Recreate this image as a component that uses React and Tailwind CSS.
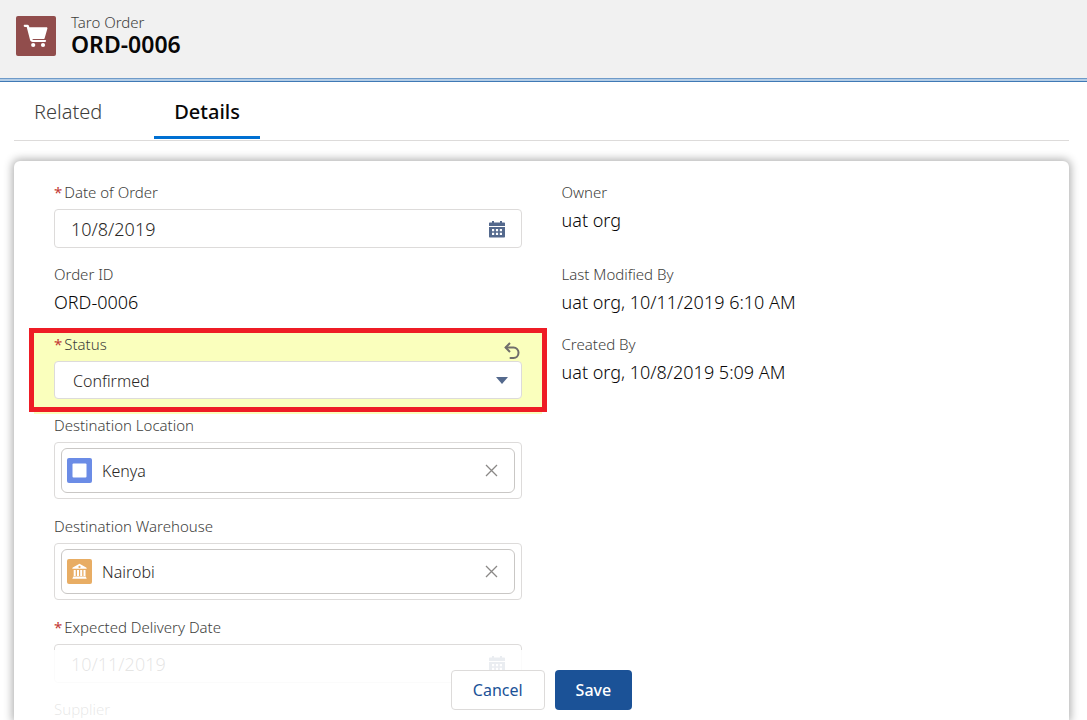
import React from 'react';
import clsx from 'clsx';

const CartIcon = () => (
  <svg width="40" height="40" viewBox="0 0 40 40" fill="#fff" aria-hidden="true">
    <path d="M8.800 8.700h2.600c.8 0 1.300.4 1.500 1.100l.5 1.500h17c.8 0 1.200.6 1 1.300l-2.700 9.300c-.2.800-.8 1.200-1.600 1.200H16.300c.2.700.6 1 1.300 1h11.400c.7 0 1.100.4 1.100.9s-.4.900-1.100.900H16.700c-1.500 0-2.300-.8-2.700-2.200L10.700 10.900H8.800c-.7 0-1.100-.5-1.100-1.100s.4-1.100 1.100-1.100z" />
    <circle cx="17.200" cy="29" r="2.100" />
    <circle cx="27" cy="29" r="2.100" />
  </svg>
);

const CalendarIcon = () => (
  <svg width="16" height="17" viewBox="0 0 16 17" aria-hidden="true">
    <path
      fillRule="evenodd"
      fill="#54698d"
      d="M3 0h2v1.500h6V0h2v1.500h2c.6 0 1 .4 1 1V5H0V2.500c0-.6.400-1 1-1h2zM0 6h16v9.500c0 .6-.4 1-1 1H1c-.6 0-1-.4-1-1zM3 8v2.200h2.200V8zm3.900 0v2.200h2.200V8zm3.900 0v2.200H13V8zM3 11.700v2.200h2.200v-2.200zm3.900 0v2.200h2.200v-2.200zm3.900 0v2.200H13v-2.200z"
    />
  </svg>
);

const UndoIcon = () => (
  <svg width="16" height="18" viewBox="0 0 16 18" fill="none" stroke="#706e6b" strokeWidth="2" aria-hidden="true">
    <path d="M6 1L1.600 5.500 6 10" />
    <path d="M2 5.500h7.500a5 5 0 0 1 5 5.300c0 3.200-2.200 5.200-5 5.200H6.500" strokeLinecap="round" />
  </svg>
);

const CloseIcon = () => (
  <svg width="13" height="13" viewBox="0 0 13 13" stroke="#8a8886" strokeWidth="1.300" aria-hidden="true">
    <path d="M1 1l11 11M12 1L1 12" />
  </svg>
);

const LocationIcon = () => (
  <svg width="25" height="25" viewBox="0 0 25 25" aria-hidden="true">
    <rect width="25" height="25" rx="2" fill="#6b8ce6" />
    <rect x="5.500" y="5.500" width="14" height="14" rx="1" fill="#fff" />
  </svg>
);

const WarehouseIcon = () => (
  <svg width="25" height="25" viewBox="0 0 25 25" fill="#fff" aria-hidden="true">
    <rect width="25" height="25" rx="2" fill="#e8ad64" />
    <path
      fillRule="evenodd"
      d="M12.500 4.800l6.700 3.700c.4.300.5.600.5 1.200H5.300c0-.6.100-.9.500-1.200zM12.500 6.800a1.100 1.100 0 1 0 0 2.200 1.100 1.100 0 0 0 0-2.200z"
    />
    <path d="M6.700 11h2v6h-2zM10 11h2v6h-2zM13.200 11h2v6h-2zM16.500 11h2v6h-2zM6.300 17.500h12.500l.9 2.300H5.300z" />
  </svg>
);

const Label = ({ htmlFor, required, children }) => {
  const Tag = htmlFor ? 'label' : 'div';
  return (
    <Tag htmlFor={htmlFor} className="block text-[15px] leading-[18px] text-[#3e3e3c]">
      {required && <span className="mr-0.5 font-normal text-[#c23934]">*</span>}
      {children}
    </Tag>
  );
};

const StaticField = ({ label, value }) => (
  <div className="pb-[21px]">
    <Label>{label}</Label>
    <p className="mt-[7px] text-lg leading-6 text-[#080707]">{value}</p>
  </div>
);

const DateField = ({ id, label, value }) => (
  <div className="pb-[17px]">
    <Label htmlFor={id} required>
      {label}
    </Label>
    <div className="relative mt-2">
      <input
        id={id}
        type="text"
        defaultValue={value}
        className="h-[39px] w-full rounded border border-[#dddbda] bg-white px-4 text-lg text-[#2b2826]"
      />
      <button type="button" aria-label={`Pick ${label}`} className="absolute top-3 right-[17px]">
        <CalendarIcon />
      </button>
    </div>
  </div>
);

const LookupField = ({ id, label, value, icon }) => (
  <div className="pb-[18px]">
    <Label htmlFor={id}>{label}</Label>
    <div className="mt-2 rounded border border-[#dddbda] px-1.5 py-[5px]">
      <div className="flex h-[45px] items-center gap-2.5 rounded-md border border-[#c9c7c5] pr-4 pl-[5px]">
        {icon}
        <input id={id} type="text" defaultValue={value} className="min-w-0 flex-1 text-base text-[#2b2826]" />
        <button type="button" aria-label={`Clear ${label}`}>
          <CloseIcon />
        </button>
      </div>
    </div>
  </div>
);

const StatusField = () => (
  <div className="relative pb-[17px]">
    <div className="absolute -inset-x-5 -top-1 bottom-0.5 bg-[#faffbd]" />
    <div className="relative">
      <Label htmlFor="status" required>
        Status
      </Label>
      <div className="relative mt-2">
        <select
          id="status"
          defaultValue="Confirmed"
          className="h-[38px] w-full appearance-none rounded border border-[#dddbda] bg-white px-[18px] pt-0.5 text-base text-[#2b2826]"
        >
          <option>Confirmed</option>
        </select>
        <svg className="pointer-events-none absolute top-4 right-3.5" width="12" height="7" viewBox="0 0 12 7" aria-hidden="true">
          <path d="M0 0h12L6 7z" fill="#54698d" />
        </svg>
      </div>
      <button type="button" aria-label="Undo Status" className="absolute top-[7px] right-0.5">
        <UndoIcon />
      </button>
    </div>
    {/* Callout frame around the edited field */}
    <div className="pointer-events-none absolute -inset-x-[25px] -top-[7px] bottom-1 border-5 border-[#ee1c25]" />
  </div>
);

const tabs = ['Related', 'Details'];

export default function App() {
  return (
    <div className="flex h-screen flex-col overflow-hidden bg-white font-['Noto_Sans',sans-serif] font-light">
      <header className="flex h-[78px] shrink-0 items-start gap-[15px] bg-[#f1f1f1] px-4 pt-3">
        <div className="mt-1 rounded-xs bg-[#914d4c]">
          <CartIcon />
        </div>
        <div>
          <p className="text-[15px] leading-5 text-[#3e3e3c]">Taro Order</p>
          <h1 className="text-[23px] leading-6 font-semibold text-[#080707]">ORD-0006</h1>
        </div>
      </header>
      <div className="h-1 shrink-0 border-y border-[#6f9bc9] border-b-[#4079b5] bg-[#b4cde6]" />

      <nav className="mr-[18px] ml-3.5 flex shrink-0 gap-8 border-b border-[#dddbda] pt-1">
        {tabs.map((tab) => (
          <a
            key={tab}
            href={`#${tab.toLowerCase()}`}
            className={clsx(
              'mb-px border-b-3 px-5 pt-3 pb-2.5 text-xl leading-7',
              tab === 'Details' ? 'border-[#0070d2] font-medium text-[#080707]' : 'border-transparent text-[#3e3e3c]'
            )}
          >
            {tab}
          </a>
        ))}
      </nav>

      <main className="relative mt-5 mr-[18px] ml-3.5 min-h-0 flex-1 rounded-t-md bg-white shadow-[0_0_8px_2px_rgba(0,0,0,0.3)]">
        <form id="order-form" className="h-full overflow-hidden px-10 pt-[22px]">
          <div className="grid grid-cols-2 gap-x-10">
            <DateField id="order-date" label="Date of Order" value="10/8/2019" />
            <StaticField label="Owner" value="uat org" />
            <StaticField label="Order ID" value="ORD-0006" />
            <StaticField label="Last Modified By" value="uat org, 10/11/2019 6:10 AM" />
            <StatusField />
            <StaticField label="Created By" value="uat org, 10/8/2019 5:09 AM" />
            <div>
              <LookupField id="location" label="Destination Location" value="Kenya" icon={<LocationIcon />} />
              <LookupField id="warehouse" label="Destination Warehouse" value="Nairobi" icon={<WarehouseIcon />} />
              <DateField id="delivery-date" label="Expected Delivery Date" value="10/11/2019" />
              <Label>Supplier</Label>
            </div>
          </div>
        </form>
        <footer className="absolute inset-x-0 bottom-0 flex h-[70px] items-end justify-center gap-2.5 bg-white/88 pb-2.5">
          <button
            type="button"
            className="h-10 rounded border border-[#dddbda] bg-white px-[21px] text-base font-normal text-[#1b5297]"
          >
            Cancel
          </button>
          <button
            type="submit"
            form="order-form"
            className="h-10 rounded bg-[#1b5297] px-[21px] text-base font-medium text-white"
          >
            Save
          </button>
        </footer>
      </main>
    </div>
  );
}
